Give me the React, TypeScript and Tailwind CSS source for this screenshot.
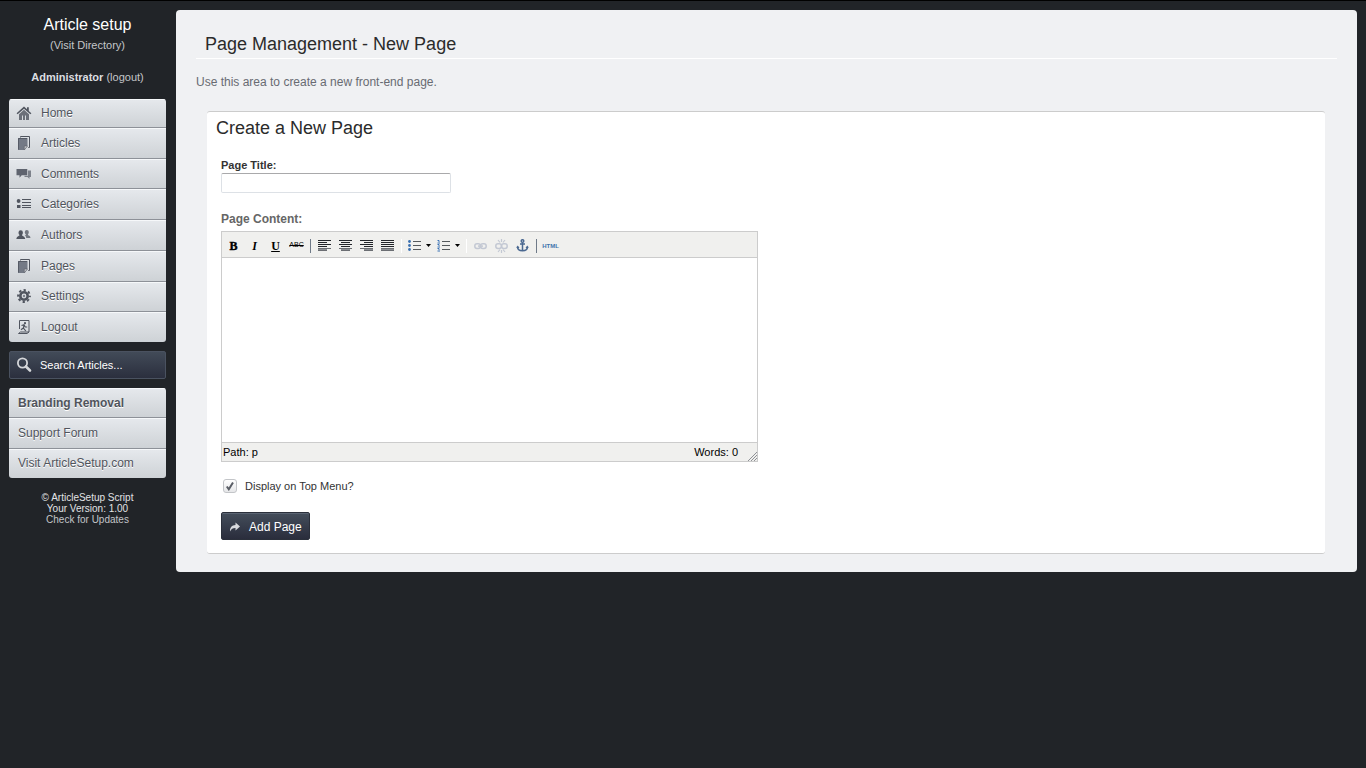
import type { ReactNode } from "react";

const ink = "#50555f";

function HomeIcon() {
  return (
    <svg width="16" height="16" viewBox="0 0 16 16" fill={ink}>
      <path d="M8 1.6L.6 8.200l1 1.100L8 3.700l6.400 5.600 1-1.100-2.600-2.300V2.200h-1.800v2.100z" />
      <path d="M8 4.800L3 9.300V15h3v-4.500h1V15h2v-4.500h1V15h3V9.300z" opacity=".8" />
    </svg>
  );
}

function PagesIcon() {
  return (
    <svg width="16" height="16" viewBox="0 0 16 16">
      <path d="M4.500 2.500v-1h9v11h-1.200" fill="none" stroke={ink} />
      <path d="M2 3h9.500v8L8.300 15H2z" fill="#747a86" />
      <path d="M2.500 14.500v-11h8.500" fill="none" stroke="#565b66" />
      <path d="M8.300 15v-4h3.200z" fill="#c5c8cc" stroke={ink} strokeWidth=".5" />
    </svg>
  );
}

function CommentsIcon() {
  return (
    <svg width="16" height="16" viewBox="0 0 16 16">
      <path d="M12 4.500h3V11h-1.500v2l-2-2H8.500V9.800H12z" fill="#7d828b" />
      <path d="M.5 3h10.800v6.300H5.700L3.500 11.800V9.300h-3z" fill="#5f646f" />
    </svg>
  );
}

function CategoriesIcon() {
  return (
    <svg width="16" height="16" viewBox="0 0 16 16" fill={ink}>
      <circle cx="2.600" cy="5" r="1.900" />
      <path d="M1 9h3.500v3H1zM6 3h9v1H6zM6 6h9v1H6zM6 9h9v1H6zM6 11h9v1H6z" />
    </svg>
  );
}

function AuthorsIcon() {
  return (
    <svg width="16" height="16" viewBox="0 0 16 16" fill={ink}>
      <path d="M8.800 5a2 2 0 014 0c0 1.200-.4 1.900-.9 2.500 0 1.200 2.600 1 2.600 3.500h-4.300c0-1.500-.8-2-1.500-2.400 1-.3 1.200-.8 1.200-1.300-.8-.5-1.100-1.200-1.100-2.300z" opacity=".75" />
      <path d="M2.500 5.500a2.200 2.200 0 014.400 0c0 1.200-.4 1.900-.9 2.400 0 1.300 3.200 1.100 3.200 4.100H.4c0-3 3.100-2.800 3.100-4.100-.6-.5-1-1.200-1-2.400z" />
    </svg>
  );
}

function SettingsIcon() {
  return (
    <svg width="16" height="16" viewBox="0 0 16 16" fill="none">
      <circle cx="8" cy="8" r="5.900" stroke={ink} strokeWidth="2" strokeDasharray="2.320 2.320" strokeDashoffset="1.160" />
      <circle cx="8" cy="8" r="3.700" stroke={ink} strokeWidth="2.600" />
      <circle cx="8" cy="8" r="1.200" fill="#7d828b" />
    </svg>
  );
}

function LogoutIcon() {
  return (
    <svg width="16" height="16" viewBox="0 0 16 16" fill="none" stroke={ink}>
      <path d="M3.500 10V1.500h9.500V13l-2 1.500H2.500l2-1.500H13" />
      <circle cx="9" cy="4.200" r="1.100" fill={ink} stroke="none" />
      <path d="M5.500 6.500L8 5.800 9.200 8h2M8 6l-.6 3L9.800 12M7.300 9L5 10.800" strokeWidth="1.200" />
    </svg>
  );
}

const NAV_ITEMS: { label: string; icon: ReactNode }[] = [
  { label: "Home", icon: <HomeIcon /> },
  { label: "Articles", icon: <PagesIcon /> },
  { label: "Comments", icon: <CommentsIcon /> },
  { label: "Categories", icon: <CategoriesIcon /> },
  { label: "Authors", icon: <AuthorsIcon /> },
  { label: "Pages", icon: <PagesIcon /> },
  { label: "Settings", icon: <SettingsIcon /> },
  { label: "Logout", icon: <LogoutIcon /> },
];

const rowClass =
  "flex items-center bg-linear-to-b from-[#e6e9ed] to-[#ced2d6] text-xs text-[#50545c] text-shadow-[0_1px_0_#ffffff] border-b border-[#8d9198] shadow-[inset_0_1px_0_#f6f8fa] last:border-b-0";

function Sidebar() {
  return (
    <aside className="w-[176px] shrink-0 pl-[9px] pr-[10px] pt-3.5">
      <div className="text-center text-[11px] leading-4 text-[#c4c6c9]">
        <h1 className="text-base leading-5 text-white">Article setup</h1>
        <a href="#" className="mt-0.5 block">(Visit Directory)</a>
        <p className="mt-4">
          <a href="#" className="font-bold text-[#dcdee0]">Administrator</a> <a href="#">(logout)</a>
        </p>
      </div>

      <nav className="mt-3.5 flex h-[243px] flex-col overflow-hidden rounded-[3px]">
        {NAV_ITEMS.map((item) => (
          <a key={item.label} href="#" className={`${rowClass} flex-1 first:flex-none first:h-[29px] gap-2 pl-[7px]`}>
            <span className="w-4">{item.icon}</span>
            <span className="pl-px">{item.label}</span>
          </a>
        ))}
      </nav>

      <label className="mt-[9px] flex h-7 items-center gap-2 rounded-xs border border-[#4a5260] bg-linear-to-b from-[#424b58] to-[#2b2f3e] pl-1.5">
        <svg width="16" height="16" viewBox="0 0 16 16" fill="none" stroke="#d5d7da" className="shrink-0">
          <circle cx="6.500" cy="6" r="4.600" strokeWidth="1.800" />
          <path d="M9.900 9.500l4.100 4" strokeWidth="2.600" strokeLinecap="round" />
        </svg>
        <input
          type="text"
          aria-label="Search Articles"
          placeholder="Search Articles..."
          className="w-full min-w-0 bg-transparent text-[11px] text-white outline-none placeholder:text-white"
        />
      </label>

      <nav className="mt-[9px] flex h-[90px] flex-col overflow-hidden rounded-[3px]">
        <a href="#" className={`${rowClass} flex-1 pl-[9px] font-bold`}>Branding Removal</a>
        <a href="#" className={`${rowClass} flex-1 pl-[9px]`}>Support Forum</a>
        <a href="#" className={`${rowClass} flex-1 pl-[9px]`}>Visit ArticleSetup.com</a>
      </nav>

      <footer className="mt-3.5 text-center text-[10px] leading-[11px] text-[#e2e3e5]">
        <p>© ArticleSetup Script</p>
        <p>Your Version: 1.00</p>
        <a href="#" className="block text-[#c4c6c9]">Check for Updates</a>
      </footer>
    </aside>
  );
}

function ToolButton({ label, children }: { label: string; children: ReactNode }) {
  return (
    <button type="button" aria-label={label} className="flex h-5 w-[21px] items-center justify-center">
      {children}
    </button>
  );
}

function Separator({ light }: { light?: boolean }) {
  return (
    <span className="flex w-[7px] justify-center">
      <span className={light ? "h-3.5 w-px bg-white" : "h-3.5 w-px bg-[#6f7a88]"} />
    </span>
  );
}

// x offset and width of the short lines, for a 13px wide glyph
const ALIGNMENTS = [
  { label: "Align left", x: 0, w: 9 },
  { label: "Align center", x: 2, w: 9 },
  { label: "Align right", x: 4, w: 9 },
  { label: "Justify", x: 0, w: 13 },
];

function AlignIcon({ x, w }: { x: number; w: number }) {
  return (
    <svg width="13" height="11" viewBox="0 0 13 11" shapeRendering="crispEdges">
      {[0, 2, 4, 6, 8, 10].map((y, i) => (
        <rect key={y} x={i % 2 ? x : 0} y={y} width={i % 2 ? w : 13} height="1" fill={i > 3 ? "#6b6e73" : "#22252a"} />
      ))}
      <rect x={x} y="9" width={w} height="1" fill="#8d9094" />
    </svg>
  );
}

function ListIcon({ numbered }: { numbered?: boolean }) {
  return (
    <svg width="13" height="12" viewBox="0 0 13 12">
      {[1, 5, 9].map((y) => (
        <g key={y}>
          {numbered ? (
            <path d={`M.5 ${y - 0.5}h1.500v1.500M.5 ${y + 2}h2.500`} stroke="#3a72b5" fill="none" />
          ) : (
            <circle cx="1.500" cy={y + 0.5} r="1.400" fill="#3a6fb0" />
          )}
          <rect x="5" y={y} width="8" height="1" fill="#55595c" />
        </g>
      ))}
    </svg>
  );
}

function ListButton({ label, numbered }: { label: string; numbered?: boolean }) {
  return (
    <button type="button" aria-label={label} className="flex h-5 w-[29px] items-center justify-center gap-[5px]">
      <ListIcon numbered={numbered} />
      <svg width="5" height="3" viewBox="0 0 5 3">
        <path d="M0 0h5L2.500 3z" fill="#000" />
      </svg>
    </button>
  );
}

function LinkIcon({ broken }: { broken?: boolean }) {
  return (
    <svg width="13" height="14" viewBox="0 0 13 14" fill="none" stroke="#c3c8d3" strokeWidth="1.500">
      <rect x=".8" y="4.800" width="5.600" height="4.600" rx="2.200" />
      <rect x="6.600" y="4.800" width="5.600" height="4.600" rx="2.200" />
      {broken ? (
        <path d="M3 1l2 2.500M6.500 0v3M10 1L8 3.500M3 13l2-2.500M6.500 14v-3M10 13l-2-2.500" strokeWidth="1.200" />
      ) : (
        <path d="M4 7.100h5" />
      )}
    </svg>
  );
}

function AnchorIcon() {
  return (
    <svg width="13" height="13" viewBox="0 0 13 13" fill="none" stroke="#4a6890" strokeWidth="1.500">
      <circle cx="6.500" cy="2" r="1.300" />
      <path d="M6.500 3.500v8.500M4 5h5M1.500 7.500c0 3 2 4.300 5 4.300s5-1.300 5-4.300" />
      <path d="M.3 9l1.400-2.500L3.500 9zM9.500 9l1.800-2.500L12.700 9z" fill="#4a6890" stroke="none" />
    </svg>
  );
}

function Toolbar() {
  return (
    <div className="flex h-[26px] items-center border-b border-[#cccccc] bg-[#f0f0ee] pl-px pt-0.5 text-black" role="toolbar">
      <ToolButton label="Bold"><b className="font-['Liberation_Serif',serif] text-xs [-webkit-text-stroke:0.4px_black]">B</b></ToolButton>
      <ToolButton label="Italic"><i className="font-['Liberation_Serif',serif] text-xs font-bold">I</i></ToolButton>
      <ToolButton label="Underline"><u className="font-['Liberation_Serif',serif] text-xs font-bold">U</u></ToolButton>
      <ToolButton label="Strikethrough"><s className="font-['Liberation_Sans',sans-serif] text-[7px]">ABC</s></ToolButton>
      <Separator />
      {ALIGNMENTS.map((a) => (
        <ToolButton key={a.label} label={a.label}><AlignIcon x={a.x} w={a.w} /></ToolButton>
      ))}
      <Separator light />
      <ListButton label="Bulleted list" />
      <ListButton label="Numbered list" numbered />
      <Separator light />
      <ToolButton label="Insert link"><LinkIcon /></ToolButton>
      <ToolButton label="Remove link"><LinkIcon broken /></ToolButton>
      <ToolButton label="Anchor"><AnchorIcon /></ToolButton>
      <Separator />
      <ToolButton label="Edit HTML source"><span className="text-[6px] font-bold leading-none text-[#3f74ad]">HTML</span></ToolButton>
    </div>
  );
}

function Editor() {
  return (
    <div className="mt-[5px] w-full max-w-[537px] border border-[#cccccc]">
      <Toolbar />
      <textarea id="content" className="block h-[184px] w-full resize-none bg-white p-2 text-xs outline-none" />
      <div className="flex h-[19px] items-center justify-between border-t border-[#cccccc] bg-[#f0f0ee] pl-px text-[11px] text-black">
        <span>Path: p</span>
        <span className="flex items-center gap-2.5 self-stretch">
          Words: 0
          <svg width="9" height="9" viewBox="0 0 9 9" stroke="#8f9297" className="self-end">
            <path d="M0 9L9 0M3 9l6-6M6 9l3-3" />
          </svg>
        </span>
      </div>
    </div>
  );
}

function NewPageForm() {
  return (
    <form className="ml-[11px] mr-3 mt-[21px] rounded-[3px] border-y border-[#cccccc] bg-white px-3.5 pb-[13px] pt-1">
      <h3 className="-ml-[5px] text-lg leading-6 text-[#2b2b2b]">Create a New Page</h3>
      <label htmlFor="title" className="mt-[18px] block text-[11px] font-bold leading-[15px] text-[#333333]">Page Title:</label>
      <input
        id="title"
        type="text"
        className="block h-5 w-[230px] rounded-xs border border-[#dde1e6] border-t-[#a9a9ab] bg-white px-1 text-xs outline-none"
      />
      <label htmlFor="content" className="mt-[18px] block text-xs font-bold leading-4 text-[#666666]">Page Content:</label>
      <div className="-mt-px">
        <Editor />
      </div>
      <label className="mt-4 flex items-center gap-2 pl-0.5 text-[11px] leading-4 text-[#333333]">
        <span className="grid size-3.5 place-items-center">
          <input
            type="checkbox"
            defaultChecked
            className="col-start-1 row-start-1 size-3.5 appearance-none rounded-[3px] border border-[#c3c5c8] bg-linear-to-b from-white to-[#e6e7e9]"
          />
          <svg width="10" height="10" viewBox="0 0 10 10" fill="none" stroke="#5a5e66" className="pointer-events-none col-start-1 row-start-1">
            <path d="M1.800 5.500l2 2.800L8 1.500" strokeWidth="2" />
          </svg>
        </span>
        Display on Top Menu?
      </label>
      <button
        type="submit"
        className="mt-[18px] flex h-7 items-center gap-2 rounded-xs border border-[#2b303b] bg-linear-to-b from-[#444e5b] to-[#2a2d3c] px-[7px] pt-0.5 text-xs text-white shadow-[inset_0_1px_0_#5a6472]"
      >
        <svg width="12" height="12" viewBox="0 0 12 12" fill="#d8dade">
          <path d="M6.500 1.500L11 5.500l-4.500 4V7C4 6.900 2.200 7.800 1 10.500.9 6.500 2.800 4.200 6.500 4z" />
        </svg>
        <span>Add Page</span>
      </button>
    </form>
  );
}

export default function App() {
  return (
    <div className="flex min-h-screen items-start border-t border-black bg-[#212428] font-['Liberation_Sans',Arial,sans-serif]">
      <Sidebar />
      <main className="mr-[9px] mt-[9px] min-w-0 flex-1 rounded-[4px] bg-[#f0f1f3] px-5 pb-[18px] pt-[22px]">
        <h2 className="border-b border-white pb-0.5 pl-[9px] text-lg leading-6 text-[#2b2b2b]">Page Management - New Page</h2>
        <p className="mt-[15px] text-xs leading-4 text-[#686b72]">Use this area to create a new front-end page.</p>
        <NewPageForm />
      </main>
    </div>
  );
}
